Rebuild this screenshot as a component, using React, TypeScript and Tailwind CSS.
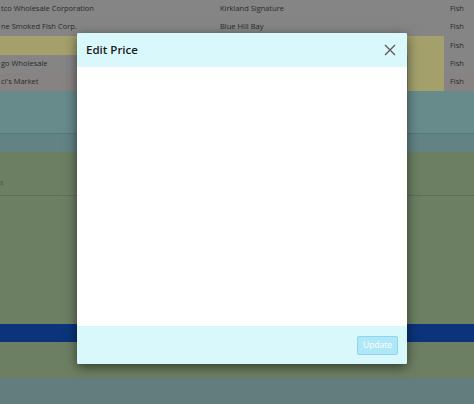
import React from "react";

const font = { fontFamily: '"Open Sans", "Noto Sans", sans-serif' };

function Row({
  h,
  left,
  mid,
  cls,
  yellowFull,
  yellowCell,
}: {
  h: string;
  left?: string;
  mid?: string;
  cls: string;
  yellowFull?: boolean;
  yellowCell?: boolean;
}) {
  return (
    <div className={`flex ${h} ${cls} text-[7.5px] text-[#2b2b2b] items-center`}>
      <div className={`flex h-full items-center ${yellowFull ? "bg-[#a3a06c]" : ""} w-[444px]`}>
        <div className="w-[220px] pl-[1px] whitespace-nowrap overflow-hidden">{left}</div>
        <div className="w-[188px] whitespace-nowrap overflow-hidden">{mid}</div>
        <div className={`h-full w-[36px] ${yellowCell ? "bg-[#a3a06c]" : ""}`}></div>
      </div>
      <div className="pl-[6px]">Fish</div>
    </div>
  );
}

export default function App() {
  return (
    <div className="relative w-[474px] h-[404px] overflow-hidden bg-[#637c7d]" style={font}>
      <div className="flex flex-col">
        <Row h="h-[18px]" cls="bg-[#858585]" left="tco Wholesale Corporation" mid="Kirkland Signature" />
        <Row h="h-[18px]" cls="bg-[#858585]" left="ne Smoked Fish Corp." mid="Blue Hill Bay" />
        <Row h="h-[19px]" cls="bg-[#858585]" yellowFull />
        <Row h="h-[18px]" cls="bg-[#858585]" left="go Wholesale" yellowCell />
        <Row h="h-[18px]" cls="bg-[#888383]" left="ci's Market" yellowCell />
        <div className="h-[43px] bg-[#678a8b] border-b border-[#5a7878]"></div>
        <div className="h-[18px] bg-[#628284]"></div>
        <div className="h-[44px] bg-[#6c7f63] border-b border-[#5f7058] text-[7px] text-[#4b5a45] flex items-center">
          <span className="ml-0 mt-[20px]">s</span>
        </div>
        <div className="h-[128px] bg-[#6c7f63]"></div>
        <div className="h-[18px] bg-[#0b347b]"></div>
        <div className="h-[36px] bg-[#6c7f63]"></div>
        <div className="h-[26px] bg-[#637c7d]"></div>
      </div>

      <div className="absolute left-[77px] top-[33px] w-[330px] h-[331px] bg-white flex flex-col shadow-[0_3px_12px_rgba(0,0,0,0.55)] rounded-[2px] overflow-hidden">
        <div className="h-[34px] bg-[#d9f8fc] flex items-center justify-between pl-[9px] pr-[7px] border-b border-[#e6f5f7]">
          <div className="text-[11.5px] font-semibold text-[#1a1a1a]">Edit Price</div>
          <svg width="20" height="20" viewBox="0 0 20 20" className="text-[#555]">
            <path d="M5 5 L15 15 M15 5 L5 15" stroke="currentColor" strokeWidth="1.3" fill="none" />
          </svg>
        </div>
        <div className="flex-1 bg-white"></div>
        <div className="h-[38px] bg-[#d9f8fc] flex items-center justify-end pr-[9px] pt-[1px]">
          <button className="w-[41px] h-[19px] bg-[#aee7f8] border border-[#8fd5ef] rounded-[2px] text-[8.5px] text-white flex items-center justify-center">
            Update
          </button>
        </div>
      </div>
    </div>
  );
}
